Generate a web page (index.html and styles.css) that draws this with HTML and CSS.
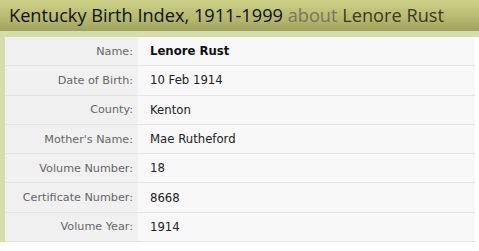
FILE: index.html
```html
<!DOCTYPE html>
<html>
<head>
<meta charset="utf-8">
<link rel="stylesheet" href="styles.css">
</head>
<body>
<div class="record">
  <h1 class="title">Kentucky Birth Index, 1911-1999 <span class="about">about</span> <span class="person">Lenore Rust</span></h1>
  <div class="band"></div>
  <div class="panel">
    <table class="facts">
      <tr><th>Name:</th><td><strong>Lenore Rust</strong></td></tr>
      <tr><th>Date of Birth:</th><td>10 Feb 1914</td></tr>
      <tr><th>County:</th><td>Kenton</td></tr>
      <tr><th>Mother's Name:</th><td>Mae Rutheford</td></tr>
      <tr><th>Volume Number:</th><td>18</td></tr>
      <tr><th>Certificate Number:</th><td>8668</td></tr>
      <tr><th>Volume Year:</th><td>1914</td></tr>
    </table>
  </div>
</div>
</body>
</html>
```
FILE: styles.css
```css
html, body {
  margin: 0;
  padding: 0;
  background: #ffffff;
}
.record {
  width: 479px;
}
.title {
  margin: 0;
  height: 31px;
  padding: 0 0 0 9px;
  font-family: "Open Sans", sans-serif;
  font-weight: normal;
  font-size: 18.2px;
  line-height: 31px;
  color: #111111;
  white-space: nowrap;
  background: linear-gradient(to bottom, #cdd187 0%, #b7bb72 55%, #9ea25c 100%);
}
.about {
  color: #77775f;
}
.person {
  color: #3b3b1c;
}
.band {
  height: 6px;
  background: #d6dcab;
}
.panel {
  width: 470px;
  border-left: 5px solid #d6dcab;
}
.facts {
  width: 100%;
  border-collapse: collapse;
  font-family: "DejaVu Sans", Verdana, sans-serif;
  background: #f8f8f8;
}
.facts th,
.facts td {
  height: 28.3px;
  padding: 0;
  border-bottom: 1px solid #e3e3e3;
  vertical-align: middle;
}
.facts th {
  width: 128px;
  padding-right: 5px;
  text-align: right;
  font-weight: normal;
  font-size: 11.2px;
  color: #666666;
  background: #f0f0f0;
}
.facts td {
  padding-left: 12px;
  font-size: 11.7px;
  color: #222222;
}
.facts strong {
  color: #111111;
}
```
